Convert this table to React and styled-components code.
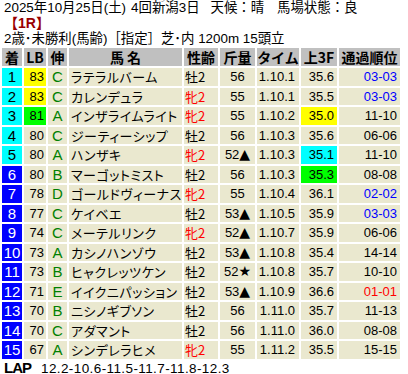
import React from "react";
import styled, { createGlobalStyle } from "styled-components";

const GlobalStyle = createGlobalStyle`
  html, body {
    margin: 0;
    padding: 0;
    background: #fff;
  }
  body {
    font-family: "Liberation Sans", "Noto Sans CJK JP", sans-serif;
    font-size: 13px;
    color: #000;
  }
`;

/* =========================
      PAGE
========================= */
const Page = styled.div`
  width: 408px;
  padding: 0 2px;
  box-sizing: border-box;
`;

const InfoLine = styled.div`
  padding-left: 2px;
  height: 15.5px;
  line-height: 15.5px;
  font-size: 13.4px;
  white-space: pre;
  display: flex;
`;

const InfoItem = styled.span`
  margin-left: ${(p) => p.gap || 0}px;
`;

const RaceNo = styled.div`
  padding-left: 2px;
  height: 15.5px;
  line-height: 15.5px;
  font-size: 14px;
  color: #990000;
  font-weight: 700;
`;

/* =========================
      TABLE
========================= */
const Table = styled.table`
  border-collapse: separate;
  border-spacing: 2px;
  table-layout: fixed;
  width: 402px;
  margin-left: -2px;
  margin-top: -0.5px;
`;

const Th = styled.th`
  width: ${(p) => p.w}px;
  height: 18px;
  padding: 0;
  background: #c0c0c0;
  font-size: 14px;
  font-weight: 700;
  text-align: center;
  vertical-align: middle;
  font-family: "Noto Sans CJK JP", sans-serif;
  line-height: 14px;
  white-space: nowrap;
  overflow: hidden;
`;

const Td = styled.td`
  height: 17.5px;
  box-sizing: border-box;
  padding: 0 ${(p) => p.pr ?? 0}px 0 ${(p) => p.pl ?? 0}px;
  background: ${(p) => p.bg || "#eae8cf"};
  color: ${(p) => p.fg || "#000"};
  text-align: ${(p) => p.align || "center"};
  vertical-align: middle;
  font-size: ${(p) => p.fs || 13}px;
  line-height: 13px;
  white-space: nowrap;
  overflow: hidden;
`;

const NameCell = styled(Td)`
  font-family: "Noto Sans CJK JP", sans-serif;
  font-feature-settings: "palt";
  letter-spacing: 0.5px;
`;

const SexCell = styled(Td)`
  font-family: "Noto Sans CJK JP", sans-serif;
`;

const Mark = styled.span`
  font-family: "DejaVu Sans", sans-serif;
  font-size: 14px;
  line-height: 12px;
`;

const LapLine = styled.div`
  padding-left: 2px;
  height: 13px;
  line-height: 13px;
  display: flex;
  align-items: baseline;
`;

const LapLabel = styled.span`
  font-size: 15px;
  font-weight: 700;
  width: 37px;
  letter-spacing: -1px;
`;

const LapTimes = styled.span`
  font-size: 13.5px;
  letter-spacing: 0.4px;
`;

const COLS = [
  ["着", 20],
  ["LB", 22],
  ["伸", 19],
  ["馬 名", 113],
  ["性齢", 34],
  ["斤量", 35],
  ["タイム", 42],
  ["上3F", 36],
  ["通過順位", 61],
];

// rank, lb, nobi, name, sex, kg, mark, time, l3f, l3fColor, pass, passColor
const ROWS = [
  [1, 83, "C", "ラテラルバーム", "牡2", 56, "", "1.10.1", "35.6", null, "03-03", "#0000ff"],
  [2, 83, "C", "カレンデュラ", "牝2", 55, "", "1.10.1", "35.5", null, "03-03", "#0000ff"],
  [3, 81, "A", "インザライムライト", "牝2", 55, "", "1.10.2", "35.0", "#ffff00", "11-10", null],
  [4, 80, "C", "ジーティーシップ", "牡2", 56, "", "1.10.3", "35.6", null, "06-06", null],
  [5, 80, "A", "ハンザキ", "牝2", 52, "▲", "1.10.3", "35.1", "#00ffff", "11-10", null],
  [6, 80, "B", "マーゴットミスト", "牡2", 56, "", "1.10.3", "35.3", "#00ff00", "08-08", null],
  [7, 78, "D", "ゴールドヴィーナス", "牝2", 55, "", "1.10.4", "36.1", null, "02-02", "#0000ff"],
  [8, 77, "C", "ケイベエ", "牡2", 53, "▲", "1.10.5", "35.9", null, "03-03", "#0000ff"],
  [9, 74, "C", "メーテルリンク", "牝2", 52, "▲", "1.10.7", "35.9", null, "06-06", null],
  [10, 73, "A", "カシノハンゾウ", "牡2", 53, "▲", "1.10.8", "35.4", null, "14-14", null],
  [11, 73, "B", "ヒャクレッツケン", "牡2", 52, "★", "1.10.8", "35.7", null, "10-10", null],
  [12, 71, "E", "イイクニパッション", "牡2", 53, "▲", "1.10.9", "36.6", null, "01-01", "#ff0000"],
  [13, 70, "B", "ニシノギブソン", "牡2", 56, "", "1.11.0", "35.7", null, "11-13", null],
  [14, 70, "C", "アダマント", "牡2", 56, "", "1.11.0", "36.0", null, "08-08", null],
  [15, 67, "A", "シンデレラヒメ", "牝2", 55, "", "1.11.2", "35.5", null, "15-15", null],
];

const lbColor = (lb) => (lb >= 83 ? "#ffff00" : lb >= 81 ? "#00ff00" : null);

function ResultRow({ r }) {
  const [rank, lb, nobi, name, sex, kg, mark, time, l3f, l3fBg, pass, passFg] = r;
  const top = rank <= 5;
  return (
    <tr>
      <Td bg={top ? "#00ffff" : "#0000ff"} fg={top ? "#000" : "#fff"} fs={15}>
        {rank}
      </Td>
      <Td bg={lbColor(lb)} align="right" pr={2}>
        {lb}
      </Td>
      <Td fg="#008000" fs={15}>
        {nobi}
      </Td>
      <NameCell align="left" pl={2}>
        {name}
      </NameCell>
      <SexCell align="left" pl={1} fg={sex === "牝2" ? "#ff0000" : "#000"}>
        {sex}
      </SexCell>
      <Td>
        {kg}
        {mark && <Mark>{mark}</Mark>}
      </Td>
      <Td align="right" pr={4}>
        {time}
      </Td>
      <Td align="right" pr={3} bg={l3fBg}>
        {l3f}
      </Td>
      <Td align="right" pr={3} fg={passFg}>
        {pass}
      </Td>
    </tr>
  );
}

export default function App() {
  return (
    <>
      <GlobalStyle />
      <Page>
        <InfoLine>
          <InfoItem>2025年10月25日(土)</InfoItem>
          <InfoItem gap={5}>4回新潟3日</InfoItem>
          <InfoItem gap={11}>天候：晴</InfoItem>
          <InfoItem gap={13}>馬場状態：良</InfoItem>
        </InfoLine>
        <RaceNo>【1R】</RaceNo>
        <InfoLine>2歳･未勝利(馬齢)［指定］芝･内 1200m 15頭立</InfoLine>
        <Table>
          <thead>
            <tr>
              {COLS.map(([label, w]) => (
                <Th key={label} w={w}>
                  {label}
                </Th>
              ))}
            </tr>
          </thead>
          <tbody>
            {ROWS.map((r) => (
              <ResultRow key={r[0]} r={r} />
            ))}
          </tbody>
        </Table>
        <LapLine>
          <LapLabel>LAP</LapLabel>
          <LapTimes>12.2-10.6-11.5-11.7-11.8-12.3</LapTimes>
        </LapLine>
      </Page>
    </>
  );
}
